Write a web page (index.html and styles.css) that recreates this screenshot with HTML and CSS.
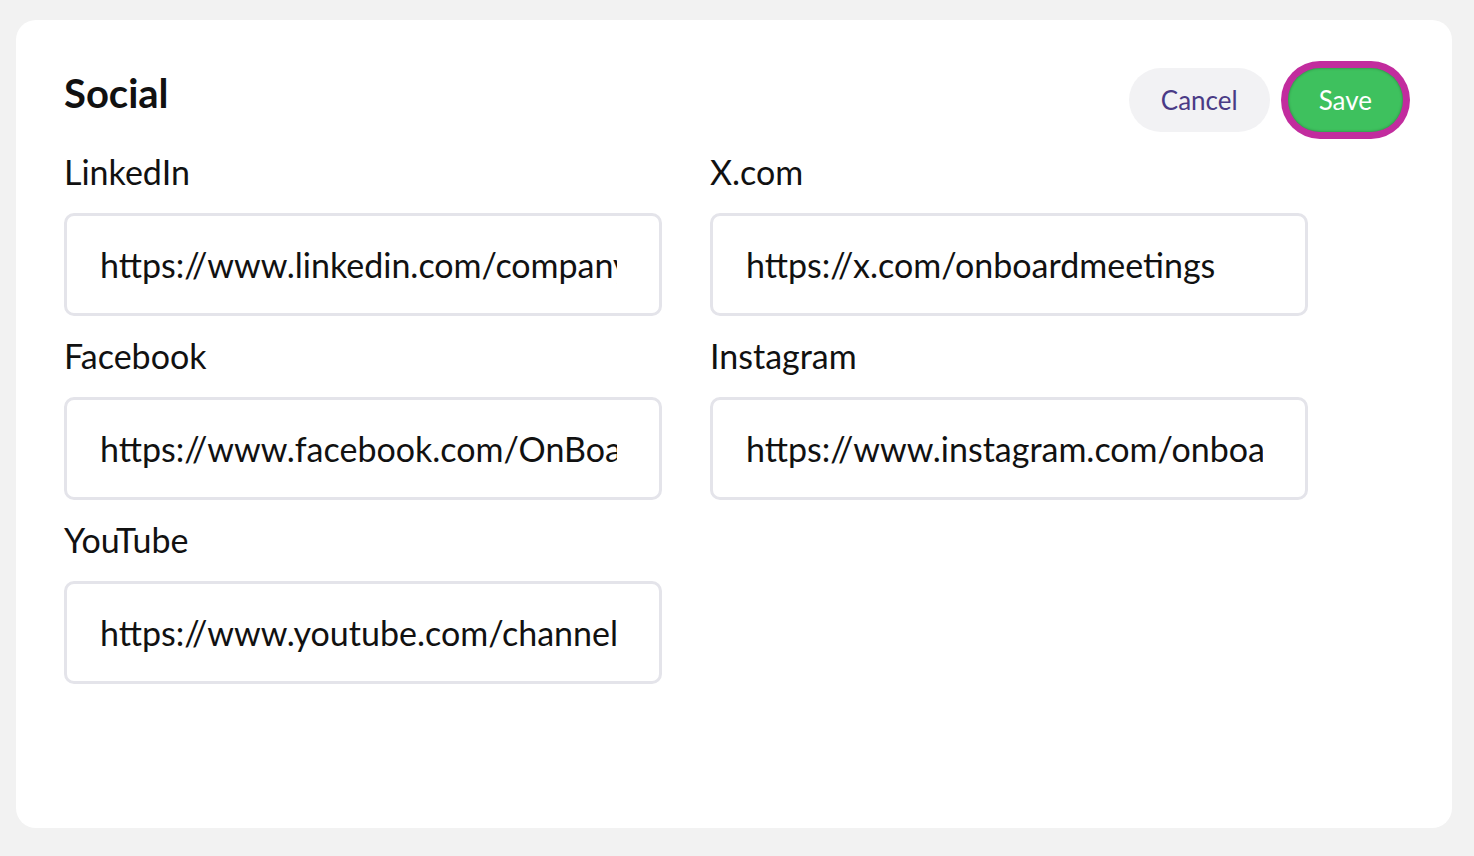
FILE: index.html
```html
<!DOCTYPE html>
<html>
<head>
  <title>Social</title>
  <link rel="stylesheet" href="styles.css">
</head>
<body>
<div class="card">
  <div class="card-header">
    <h1>Social</h1>
    <div class="actions">
      <button type="button" class="btn btn-cancel">Cancel</button>
      <button type="submit" class="btn btn-save">Save</button>
    </div>
  </div>

  <form class="social-form">
    <div class="field">
      <label for="linkedin">LinkedIn</label>
      <input type="text" id="linkedin" value="https://www.linkedin.com/company/onboard-meetings">
    </div>
    <div class="field">
      <label for="x">X.com</label>
      <input type="text" id="x" value="https://x.com/onboardmeetings">
    </div>
    <div class="field">
      <label for="facebook">Facebook</label>
      <input type="text" id="facebook" value="https://www.facebook.com/OnBoardMeetings">
    </div>
    <div class="field">
      <label for="instagram">Instagram</label>
      <input type="text" id="instagram" value="https://www.instagram.com/onboardmeetings">
    </div>
    <div class="field">
      <label for="youtube">YouTube</label>
      <input type="text" id="youtube" value="https://www.youtube.com/channel/UConboard">
    </div>
  </form>
</div>
</body>
</html>
```

FILE: styles.css
```css
body {
  font-family: Lato, "Noto Sans", sans-serif;
  margin: 0;
  padding: 20px 22px 28px 16px;
  background: #f2f2f2;
  color: #111;
}
.card {
  background: #fff;
  border-radius: 20px;
  height: 808px;
  box-sizing: border-box;
  padding: 48px 42px 0 48px;
}
.card-header {
  display: flex;
  justify-content: space-between;
  align-items: flex-start;
}
h1 {
  margin: 0;
  font-size: 40px;
  font-weight: 700;
  line-height: 50px;
}
.actions {
  display: flex;
  gap: 18px;
}
.btn {
  font-family: Lato, "Noto Sans", sans-serif;
  font-size: 26px;
  height: 64px;
  border: none;
  border-radius: 32px;
  padding: 0 32px;
}
.btn-cancel {
  background: #f2f2f4;
  color: #4a3b86;
}
.btn-save {
  background: #3ec15e;
  color: #fff;
  margin-right: 7px;
  padding: 0 31px;
  box-shadow: 0 0 0 7px #c22c9e, inset 0 0 3px rgba(0, 0, 0, 0.35);
}
.social-form {
  display: grid;
  grid-template-columns: 598px 598px;
  column-gap: 48px;
  row-gap: 20px;
  margin-top: 20px;
}
.field {
  display: flex;
  flex-direction: column;
}
label {
  font-size: 34px;
  line-height: 40px;
  margin-bottom: 21px;
}
input {
  font-family: Lato, "Noto Sans", sans-serif;
  font-size: 34px;
  color: #111;
  height: 103px;
  box-sizing: border-box;
  border: 3px solid #e4e4ea;
  border-radius: 10px;
  padding: 0 42px 0 33px;
  outline: none;
}
```
